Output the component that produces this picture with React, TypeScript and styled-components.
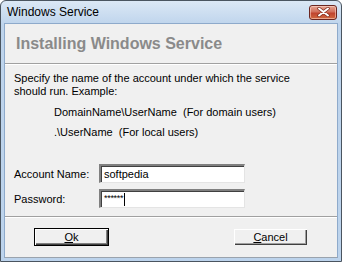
import React from 'react';
import styled, { createGlobalStyle } from 'styled-components';

const GlobalStyle = createGlobalStyle`
  html, body {
    margin: 0;
    padding: 0;
    background: #ffffff;
    overflow: hidden;
  }
`;

const Window = styled.div`
  box-sizing: border-box;
  width: 342px;
  height: 262px;
  display: flex;
  flex-direction: column;
  border: 1px solid #4a5560;
  border-radius: 6px 6px 0 0;
  background: linear-gradient(#dbe8f5, #bed4ec 24px, #bcd3ec);
  padding: 0 3px 3px 3px;
  font-family: 'Liberation Sans', Arial, sans-serif;
  color: #000;
`;

const TitleBar = styled.div`
  height: 22px;
  display: flex;
  align-items: center;
  justify-content: space-between;
  padding: 0 1px 0 3px;
  font-size: 12px;
  flex-shrink: 0;
`;

const CloseButton = styled.div`
  box-sizing: border-box;
  width: 28px;
  height: 15px;
  border: 1px solid #6b2620;
  border-radius: 3px;
  background: linear-gradient(#e6a491, #d1705c 45%, #c0442f 55%, #d0683e);
  box-shadow: inset 0 0 0 1px rgba(255, 220, 210, 0.55);
  display: flex;
  align-items: center;
  justify-content: center;
`;

const Client = styled.div`
  flex: 1;
  display: flex;
  flex-direction: column;
  background: #f0f0f0;
  border: 1px solid #8eaacb;
  border-bottom: 1px solid #9aa3ad;
`;

const Header = styled.div`
  height: 38px;
  display: flex;
  align-items: center;
  padding-left: 11px;
  font-size: 16px;
  font-weight: bold;
  color: #8a8a8a;
  padding-top: 1px;
`;

const Etched = styled.div`
  height: 1px;
  background: #a0a0a0;
  border-bottom: 1px solid #ffffff;
`;

const Body = styled.div`
  flex: 1;
  display: flex;
  flex-direction: column;
  padding: 7px 9px 0 9px;
  font-size: 11px;
`;

const Intro = styled.div`
  line-height: 13px;
`;

const Example = styled.div<{ $gap: number }>`
  padding-left: 40px;
  margin-top: ${(p) => p.$gap}px;
  line-height: 13px;
  white-space: pre;
`;

const Form = styled.div`
  display: grid;
  grid-template-columns: 85px 146px;
  row-gap: 6px;
  align-items: center;
  margin-top: 25px;
`;

const Label = styled.label`
  font-size: 11px;
`;

const Field = styled.div`
  box-sizing: border-box;
  height: 19px;
  background: #fff;
  border-top: 2px solid #808080;
  border-left: 2px solid #808080;
  border-right: 1px solid #e4e4e4;
  border-bottom: 1px solid #e4e4e4;
  box-shadow: inset 1px 1px 0 #404040;
  display: flex;
  align-items: center;
  padding-left: 3px;
  font-size: 11px;
`;

const Stars = styled.span`
  font-size: 9px;
  letter-spacing: -0.3px;
  margin-top: -3px;
`;

const Caret = styled.span`
  display: inline-block;
  width: 1px;
  height: 13px;
  background: #000;
  margin-left: 1px;
`;

const Footer = styled.div`
  display: flex;
  justify-content: space-between;
  padding: 10px 29px 0 29px;
  height: 39px;
  box-sizing: border-box;
`;

const Button = styled.div<{ $default?: boolean }>`
  box-sizing: border-box;
  width: 75px;
  height: 18px;
  background: #f0f0f0;
  display: flex;
  align-items: center;
  justify-content: center;
  font-size: 11px;
  border: 1px solid ${(p) => (p.$default ? '#000' : 'transparent')};
  box-shadow: ${(p) =>
    p.$default
      ? 'inset 1px 1px 0 #fff, inset -1px -1px 0 #404040, inset -2px -2px 0 #808080'
      : 'inset 1px 1px 0 #fff, inset -1px -1px 0 #404040, inset -2px -2px 0 #a0a0a0'};
  u {
    text-decoration: underline;
  }
`;

const CloseGlyph = () => (
  <svg width="13" height="10" viewBox="0 0 13 10">
    <path
      d="M2 1.5 L11 8.5 M11 1.5 L2 8.5"
      stroke="#7a2a1c"
      strokeWidth="3.4"
      strokeLinecap="round"
    />
    <path
      d="M2 1.5 L11 8.5 M11 1.5 L2 8.5"
      stroke="#ffffff"
      strokeWidth="2"
      strokeLinecap="round"
    />
  </svg>
);

const App: React.FC = () => {
  return (
    <>
      <GlobalStyle />
      <Window>
        <TitleBar>
          <span>Windows Service</span>
          <CloseButton>
            <CloseGlyph />
          </CloseButton>
        </TitleBar>
        <Client>
          <Header>Installing Windows Service</Header>
          <Etched />
          <Body>
            <Intro>
              Specify the name of the account under which the service
              <br />
              should run. Example:
            </Intro>
            <Example $gap={8}>{'DomainName\\UserName  (For domain users)'}</Example>
            <Example $gap={7}>{'.\\UserName  (For local users)'}</Example>
            <Form>
              <Label>Account Name:</Label>
              <Field>softpedia</Field>
              <Label>Password:</Label>
              <Field>
                <Stars>******</Stars>
                <Caret />
              </Field>
            </Form>
          </Body>
          <Etched />
          <Footer>
            <Button $default>
              <u>O</u>k
            </Button>
            <Button>
              <u>C</u>ancel
            </Button>
          </Footer>
        </Client>
      </Window>
    </>
  );
};

export default App;
